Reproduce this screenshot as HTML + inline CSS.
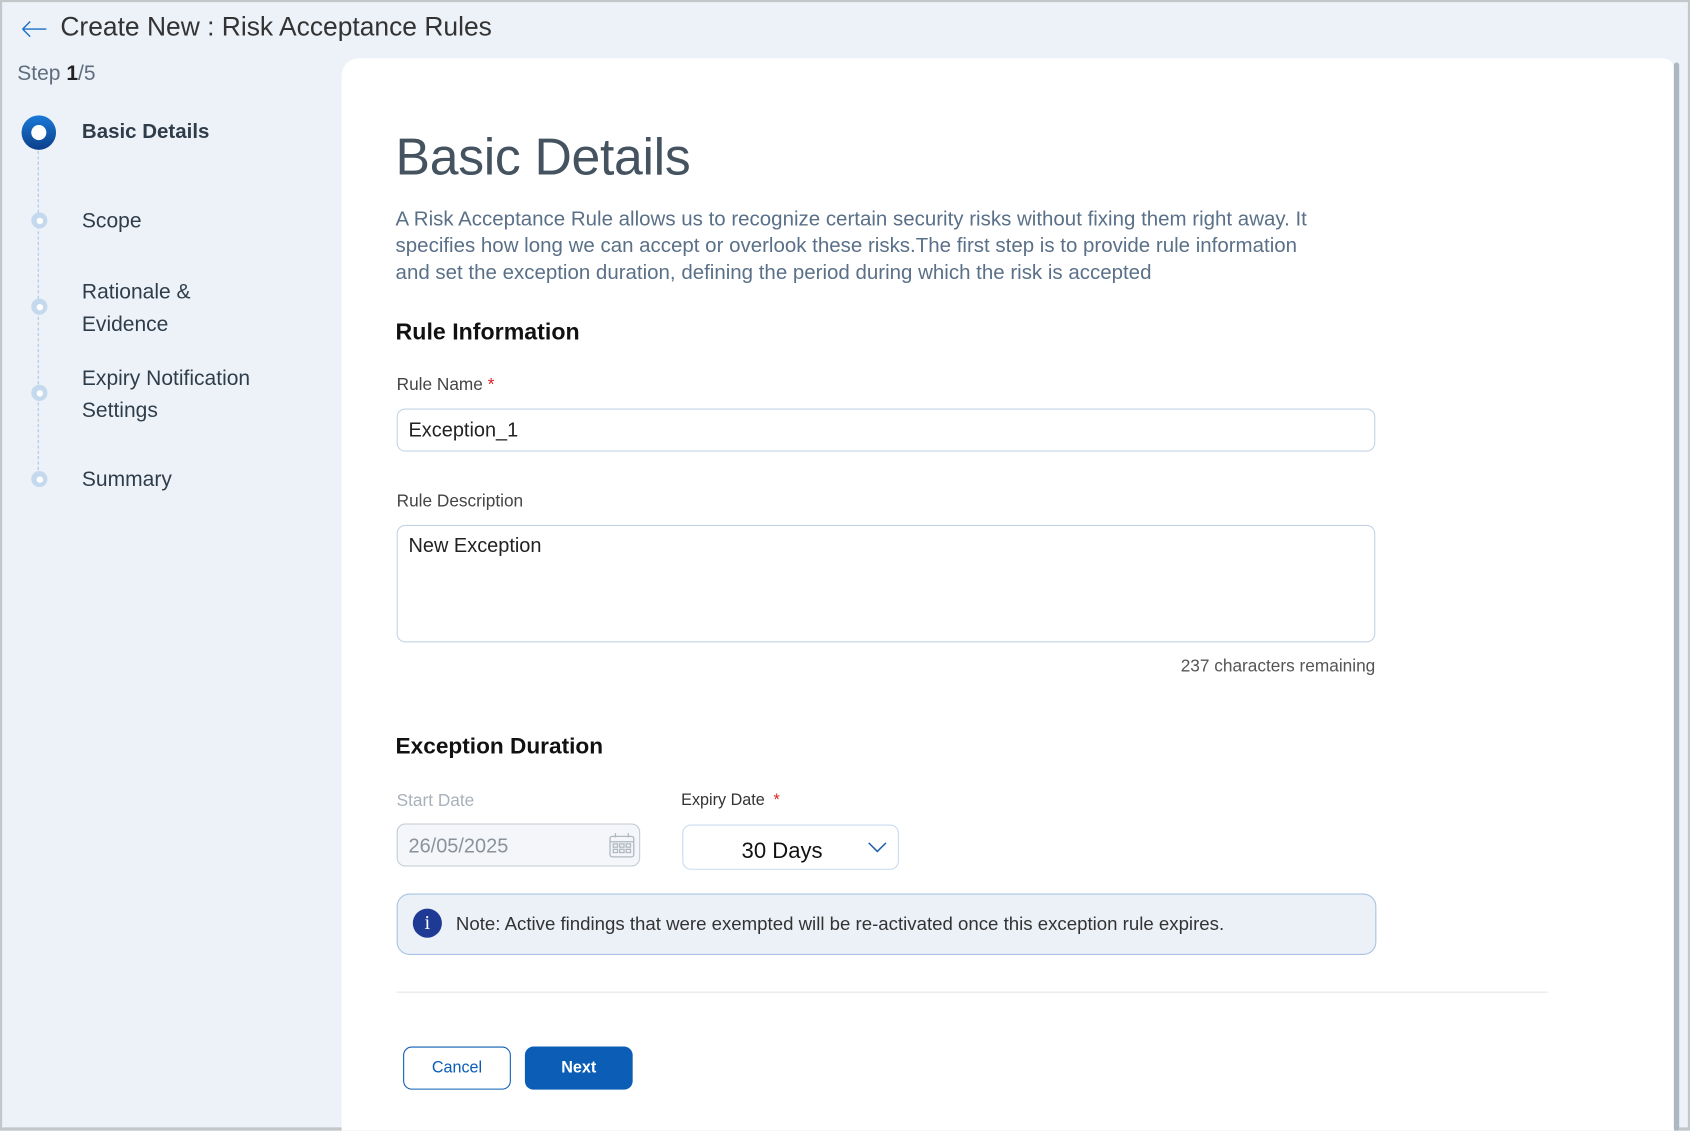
<!DOCTYPE html>
<html><head><meta charset="utf-8"><style>
*{box-sizing:border-box;margin:0;padding:0}
html,body{width:1690px;height:1130px;overflow:hidden;background:#edf2f9;font-family:"Liberation Sans",Arial,sans-serif}
#w{position:absolute;left:0;top:0;width:1568px;height:1048.5px;transform:scale(1.07781);transform-origin:0 0;background:#edf2f9;border:2px solid #c4c7ca;border-bottom:3px solid #c4c7ca}
.a{position:absolute;white-space:nowrap}
.lab{font-size:19.5px;color:#2f3d4a}
.dot{position:absolute;left:27px;width:15px;height:15px;border-radius:50%;background:#c5d9ee;}
.dot:after{content:"";position:absolute;left:4.5px;top:4.5px;width:6px;height:6px;border-radius:50%;background:#fff}
.inp{position:absolute;border:1px solid #c3d3e6;border-radius:8px;background:#fff}
</style></head><body><div id="w">
<svg class="a" style="left:15px;top:15px" width="28" height="20" viewBox="0 0 28 20"><path d="M4 10H26M4 10L11 3M4 10L11 17" stroke="#1a6fc2" stroke-width="1.3" fill="none"/></svg>
<div class="a" style="left:54px;top:10px;font-size:24.5px;color:#333">Create New : Risk Acceptance Rules</div>
<div class="a" style="left:14px;top:55px;font-size:19.5px;color:#5e6e7e">Step <b style="color:#222">1</b>/5</div>
<div class="a" style="left:33px;top:138px;height:306px;border-left:1.3px dashed #a9c6e6"></div>
<div class="a" style="left:18px;top:105px;width:32px;height:32px;border-radius:50%;background:linear-gradient(#1a7ad8,#0b3f8a)"><div style="position:absolute;left:9px;top:9px;width:14px;height:14px;border-radius:50%;background:#fff"></div></div>
<div class="a lab" style="left:74px;top:110px;font-weight:bold;font-size:19px">Basic Details</div>
<div class="dot" style="top:195px"></div><div class="a lab" style="left:74px;top:192px">Scope</div>
<div class="dot" style="top:275px"></div><div class="a lab" style="left:74px;top:254px;line-height:30px">Rationale &amp;<br>Evidence</div>
<div class="dot" style="top:355px"></div><div class="a lab" style="left:74px;top:334px;line-height:30px">Expiry Notification<br>Settings</div>
<div class="dot" style="top:435px"></div><div class="a lab" style="left:74px;top:432px">Summary</div>
<div class="a" style="left:315px;top:52px;width:1236px;height:995px;background:#fff;border-radius:16px 10px 0 0"></div>
<div class="a" style="left:1551px;top:56px;width:5px;height:991px;background:#abb8c2;border-radius:3px"></div>
<div class="a" style="left:365px;top:117px;font-size:48px;color:#44535f;letter-spacing:-.3px">Basic Details</div>
<div class="a" style="left:365px;top:189px;font-size:19px;line-height:25px;color:#5a7088;white-space:normal;width:860px">A Risk Acceptance Rule allows us to recognize certain security risks without fixing them right away. It specifies how long we can accept or overlook these risks.The first step is to provide rule information and set the exception duration, defining the period during which the risk is accepted</div>
<div class="a" style="left:365px;top:294px;font-size:21.5px;font-weight:bold;color:#111">Rule Information</div>
<div class="a" style="left:366px;top:347px;font-size:16px;color:#444">Rule Name <span style="color:#e02020">*</span></div>
<div class="inp" style="left:366px;top:377px;width:908px;height:40px"></div>
<div class="a" style="left:377px;top:386px;font-size:18.5px;color:#222">Exception_1</div>
<div class="a" style="left:366px;top:455px;font-size:16px;color:#444">Rule Description</div>
<div class="inp" style="left:366px;top:485px;width:908px;height:109px"></div>
<div class="a" style="left:377px;top:493px;font-size:18.5px;color:#222">New Exception</div>
<div class="a" style="left:1000px;top:608px;width:274px;text-align:right;font-size:16px;color:#555">237 characters remaining</div>
<div class="a" style="left:365px;top:679px;font-size:21px;font-weight:bold;color:#111">Exception Duration</div>
<div class="a" style="left:366px;top:733px;font-size:16px;color:#a8b1ba">Start Date</div>
<div class="inp" style="left:366px;top:762px;width:226px;height:40px;background:#f4f6f9;border-color:#c2cad3"></div>
<div class="a" style="left:377px;top:772px;font-size:18.5px;color:#8a939c">26/05/2025</div>
<svg class="a" style="left:562px;top:769px" width="26" height="26" viewBox="0 0 26 26" fill="none" stroke="#b0b8c0" stroke-width="1.2"><rect x="2" y="5" width="22" height="19" rx="2"/><path d="M2 10H24M7 2V6M19 2V6"/><rect x="5" y="12" width="4" height="3"/><rect x="11" y="12" width="4" height="3"/><rect x="17" y="12" width="4" height="3"/><rect x="5" y="17" width="4" height="3"/><rect x="11" y="17" width="4" height="3"/><rect x="17" y="17" width="4" height="3"/></svg>
<div class="a" style="left:630px;top:732px;font-size:15px;color:#333">Expiry Date <span style="color:#e02020;margin-left:4px">*</span></div>
<div class="inp" style="left:631px;top:763px;width:201px;height:42px;border-color:#c9daef"></div>
<div class="a" style="left:686px;top:776px;font-size:20.5px;color:#111">30 Days</div>
<svg class="a" style="left:802px;top:777px" width="20" height="14" viewBox="0 0 20 14"><path d="M2 3L10 11L18 3" stroke="#1a5ea8" stroke-width="1.4" fill="none"/></svg>
<div class="a" style="left:366px;top:827px;width:909px;height:57px;background:#ecf1f8;border:1px solid #a6c2e2;border-radius:12px"></div>
<div class="a" style="left:381px;top:841px;width:27px;height:27px;border-radius:50%;background:#1e3a94;color:#fff;font-family:'Liberation Serif',serif;font-size:19px;text-align:center;line-height:27px">i</div>
<div class="a" style="left:421px;top:845px;font-size:17.3px;color:#333">Note: Active findings that were exempted will be re-activated once this exception rule expires.</div>
<div class="a" style="left:366px;top:918px;width:1068px;height:1px;background:#e0e5ea"></div>
<div class="a" style="left:372px;top:969px;width:100px;height:40px;border:1.3px solid #0b5db5;border-radius:8px;color:#0b5db5;font-size:15px;text-align:center;line-height:38px">Cancel</div>
<div class="a" style="left:485px;top:969px;width:100px;height:40px;background:#0b5db5;border-radius:8px;color:#fff;font-size:15px;font-weight:bold;text-align:center;line-height:40px">Next</div>
</div></body></html>
